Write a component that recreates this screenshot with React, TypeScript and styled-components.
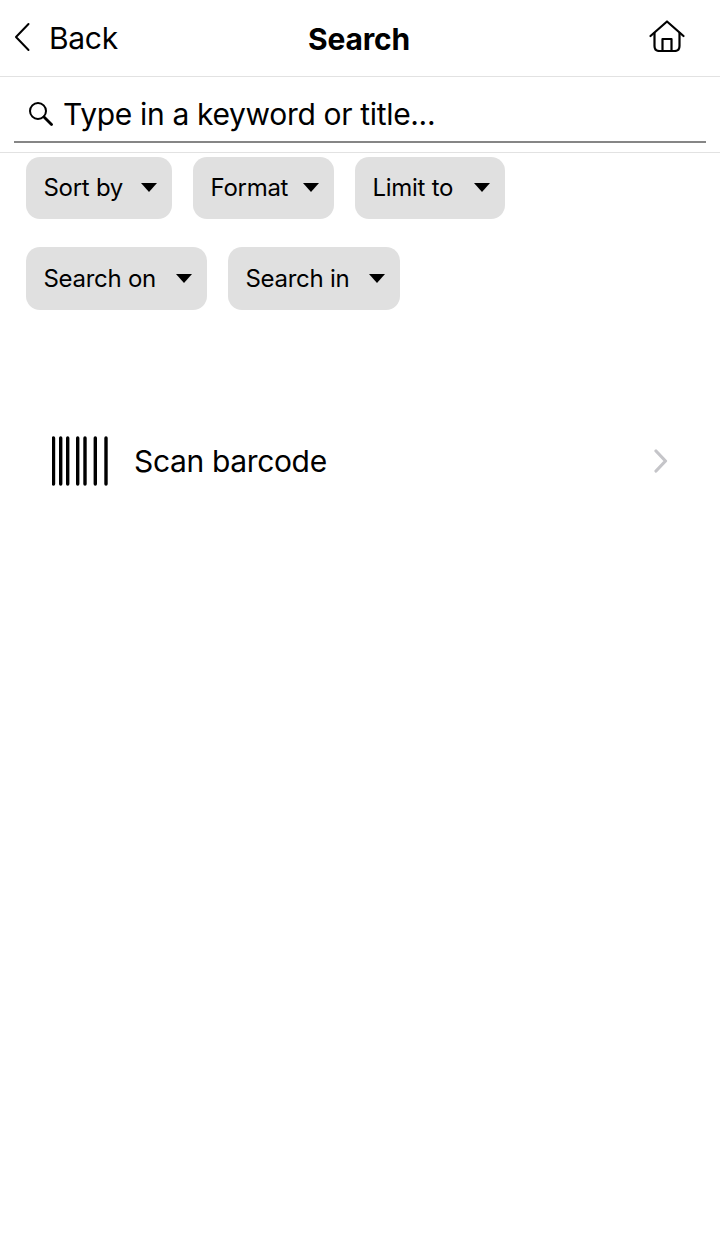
import React from "react";
import styled, { createGlobalStyle } from "styled-components";

const GlobalStyle = createGlobalStyle`
  html, body {
    margin: 0;
    padding: 0;
    background: #fff;
    font-family: Inter, "Liberation Sans", sans-serif;
    color: #000;
  }
`;

const Page = styled.div`
  width: 720px;
  height: 1245px;
  overflow: hidden;
  background: #fff;
`;

const Header = styled.header`
  height: 76px;
  border-bottom: 1px solid #e2e2e2;
  display: grid;
  grid-template-columns: 294px auto 1fr;
  align-items: center;
  padding: 0 35px 0 14px;
`;

const BackLink = styled.div`
  display: flex;
  align-items: center;
  gap: 18px;
  padding-bottom: 1px;
  font-size: 30px;
  letter-spacing: -0.3px;

  svg {
    margin-bottom: 2px;
  }
`;

const Title = styled.h1`
  margin: 0;
  padding-top: 1px;
  font-size: 30px;
  font-weight: 700;
  letter-spacing: -0.15px;
`;

const HomeButton = styled.div`
  justify-self: end;
  display: flex;
  padding-bottom: 4px;
`;

const SearchBar = styled.div`
  height: 75px;
  border-bottom: 1px solid #e2e2e2;
  padding: 0 14px;
`;

const SearchField = styled.div`
  height: 66px;
  border-bottom: 2px solid #868686;
  display: flex;
  align-items: center;
  gap: 10px;
  padding: 9px 0 0 14px;
  box-sizing: border-box;
  font-size: 30px;
  letter-spacing: -0.33px;
`;

const Filters = styled.div`
  display: flex;
  flex-wrap: wrap;
  gap: 28px 21px;
  padding: 3.5px 26px 0;
`;

const Pill = styled.button<{ $width: number }>`
  width: ${(p) => p.$width}px;
  height: 62.5px;
  border: 0;
  border-radius: 14px;
  background: #e0e0e0;
  display: flex;
  align-items: center;
  justify-content: space-between;
  padding: 0 15px 0 17.5px;
  font-family: inherit;
  font-size: 24px;
  letter-spacing: -0.28px;
  color: #000;
`;

const Caret = styled.span`
  width: 0;
  height: 0;
  border-left: 8px solid transparent;
  border-right: 8px solid transparent;
  border-top: 9px solid #000;
`;

const ScanRow = styled.div`
  margin-top: 121px;
  display: flex;
  align-items: center;
  padding: 0 48px 0 52px;
  height: 60px;
`;

const ScanLabel = styled.span`
  flex: 1;
  margin-left: 26px;
  font-size: 30px;
  letter-spacing: -0.35px;
`;

const filters = [
  { label: "Sort by", width: 146 },
  { label: "Format", width: 141 },
  { label: "Limit to", width: 150 },
  { label: "Search on", width: 181 },
  { label: "Search in", width: 172 },
];
const barX = [1.5, 8.7, 15.7, 25.7, 33, 43.3, 54];

export default function App() {
  return (
    <Page>
      <GlobalStyle />
      <Header>
        <BackLink>
          <svg width="17" height="30" viewBox="0 0 17 30" fill="none" stroke="#000" strokeWidth="2" strokeLinecap="round" strokeLinejoin="round">
            <path d="M14.5 2 L2 15 L14.5 28" />
          </svg>
          Back
        </BackLink>
        <Title>Search</Title>
        <HomeButton>
          <svg width="36" height="32" viewBox="0 0 36 32" fill="none" stroke="#000" strokeWidth="2.2" strokeLinecap="round" strokeLinejoin="round">
            <path d="M1.5 16 L18 1.5 L34.5 16" />
            <path d="M5.5 13 V26 Q5.5 31 10.5 31 H25.5 Q30.5 31 30.5 26 V13" />
            <path d="M13.5 31 V19 H22.5 V31" />
          </svg>
        </HomeButton>
      </Header>
      <SearchBar>
        <SearchField>
          <svg width="25" height="25" viewBox="0 0 25 25" fill="none" stroke="#000" strokeWidth="2" strokeLinecap="round">
            <circle cx="10" cy="10" r="8" />
            <path d="M16 16 L23.5 23.5" strokeWidth="2.8" />
          </svg>
          Type in a keyword or title...
        </SearchField>
      </SearchBar>
      <Filters>
        {filters.map((f) => (
          <Pill key={f.label} $width={f.width}>
            {f.label}
            <Caret />
          </Pill>
        ))}
      </Filters>
      <ScanRow>
        <svg width="56" height="50" viewBox="0 0 56 50" stroke="#000" strokeWidth="3.4" strokeLinecap="round">
          {barX.map((x) => (
            <line key={x} x1={x} y1="2" x2={x} y2="48" />
          ))}
        </svg>
        <ScanLabel>Scan barcode</ScanLabel>
        <svg width="18" height="26" viewBox="0 0 18 26" fill="none" stroke="#c5c5c9" strokeWidth="3.2" strokeLinecap="round" strokeLinejoin="round">
          <path d="M2 3 L11.5 13 L2 23" />
        </svg>
      </ScanRow>
    </Page>
  );
}
